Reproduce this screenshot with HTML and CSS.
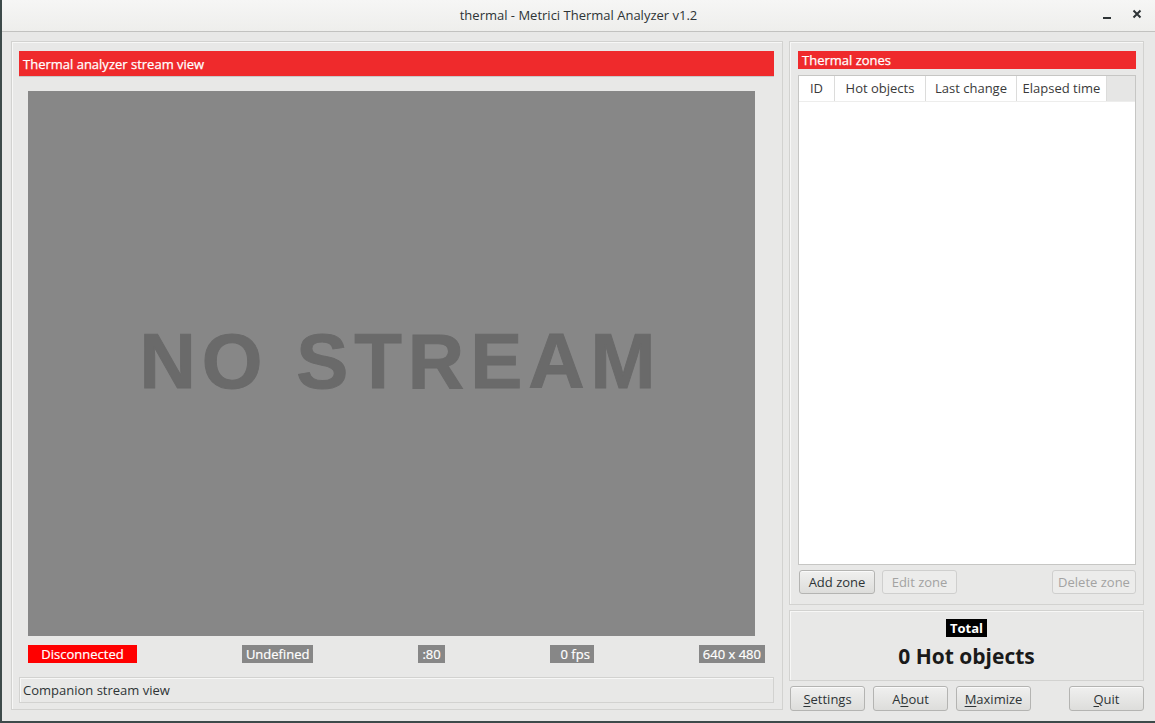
FILE: index.html
```html
<!DOCTYPE html>
<html>
<head>
<meta charset="utf-8">
<link rel="stylesheet" href="styles.css">
</head>
<body>
<div class="window">
  <div class="titlebar">
    <span class="title">thermal - Metrici Thermal Analyzer v1.2</span>
    <div class="wbtns">
      <svg width="12" height="12" viewBox="0 0 12 12"><rect x="2" y="9" width="8" height="2" fill="#2e3436"/></svg>
      <svg width="12" height="12" viewBox="0 0 12 12"><path d="M2.5 2.5 L9.5 9.5 M9.5 2.5 L2.5 9.5" stroke="#2e3436" stroke-width="2"/></svg>
    </div>
  </div>
  <div class="main">
    <div class="frame left">
      <div class="redhead big">Thermal analyzer stream view</div>
      <div class="stream"><span>NO STREAM</span></div>
      <div class="status">
        <span class="tag red">Disconnected</span>
        <span class="tag">Undefined</span>
        <span class="tag">:80</span>
        <span class="tag fps">0 fps</span>
        <span class="tag">640 x 480</span>
      </div>
      <div class="companion">Companion stream view</div>
    </div>
    <div class="right">
      <div class="frame zones">
        <div class="redhead small">Thermal zones</div>
        <div class="table">
          <div class="thead">
            <div class="th c1">ID</div>
            <div class="th c2">Hot objects</div>
            <div class="th c3">Last change</div>
            <div class="th c4">Elapsed time</div>
          </div>
          <div class="tbody"></div>
        </div>
        <div class="zbtns">
          <button class="btn small">Add zone</button>
          <button class="btn small dis">Edit zone</button>
          <span class="spacer"></span>
          <button class="btn small dis">Delete zone</button>
        </div>
      </div>
      <div class="frame total">
        <span class="totlabel">Total</span>
        <span class="totval">0 Hot objects</span>
      </div>
      <div class="mainbtns">
        <button class="btn"><u>S</u>ettings</button>
        <button class="btn">A<u>b</u>out</button>
        <button class="btn"><u>M</u>aximize</button>
        <span class="spacer"></span>
        <button class="btn"><u>Q</u>uit</button>
      </div>
    </div>
  </div>
</div>
</body>
</html>
```
FILE: styles.css
```css
html, body {
  margin: 0;
  padding: 0;
}
body {
  width: 1155px;
  height: 723px;
  background: #3d4a4a;
  font-family: "Open Sans", "Noto Sans", sans-serif;
  font-size: 13px;
  color: #2e3436;
  overflow: hidden;
}
.window {
  width: 1153px;
  height: 721px;
  margin-left: 2px;
  background: #e8e8e7;
  display: flex;
  flex-direction: column;
}
.titlebar {
  height: 31px;
  flex: none;
  background: linear-gradient(#f6f6f5, #eeeeec);
  border-bottom: 1px solid #c2c2c0;
  position: relative;
  display: flex;
  align-items: center;
  justify-content: center;
}
.title {
  font-size: 13px;
  color: #2e3436;
  margin-top: -1px;
}
.wbtns {
  position: absolute;
  right: 12px;
  top: 8px;
  display: flex;
  gap: 18px;
}
.main {
  flex: 1;
  display: flex;
  padding: 9px 9px 10px 9px;
  gap: 6px;
}
.frame {
  border: 1px solid #d2d2d0;
  box-shadow: inset 1px 1px 0 #f7f7f6;
  box-sizing: border-box;
}
.left {
  width: 772px;
  height: 669px;
  padding: 9px 8px 0 7px;
  display: flex;
  flex-direction: column;
}
.redhead {
  background: #ef2a2c;
  color: #fff;
  padding-left: 4px;
  display: flex;
  align-items: center;
  font-size: 13px;
  font-weight: 500;
  -webkit-text-stroke: 0.25px #fff;
}
.redhead.big {
  height: 25px;
  box-shadow: 0 1px 0 #c8c8c8;
}
.redhead.small {
  height: 18px;
}
.stream {
  margin: 15px 0 0 9px;
  width: 727px;
  height: 545px;
  background: #878787;
  display: flex;
  align-items: center;
  justify-content: center;
}
.stream span {
  font-family: "Liberation Sans", Arial, sans-serif;
  font-weight: bold;
  font-size: 78px;
  letter-spacing: 6px;
  color: #6a6a6a;
  margin-top: -4px;
  margin-left: 18px;
  -webkit-text-stroke: 1px #6a6a6a;
}
.status {
  margin: 9px 0 0 9px;
  width: 737px;
  height: 18px;
  display: flex;
  justify-content: space-between;
}
.tag {
  background: #878787;
  color: #fff;
  padding: 0 4px;
  height: 18px;
  line-height: 18px;
  font-size: 13px;
  -webkit-text-stroke: 0.2px #fff;
}
.tag.red {
  background: #ff0000;
  width: 101px;
  text-align: center;
}
.tag.fps {
  padding-left: 11px;
}
.companion {
  margin-top: 14px;
  height: 24px;
  border: 1px solid #d2d2d0;
  box-shadow: inset 1px 1px 0 #f7f7f6;
  padding-left: 3px;
  display: flex;
  align-items: center;
  color: #2e3436;
}
.right {
  width: 355px;
  display: flex;
  flex-direction: column;
}
.zones {
  height: 564px;
  padding: 9px 7px 0 8px;
  display: flex;
  flex-direction: column;
}
.table {
  margin-top: 6px;
  height: 490px;
  border: 1px solid #c6c6c4;
  box-sizing: border-box;
  background: #fff;
  display: flex;
  flex-direction: column;
}
.thead {
  height: 25px;
  display: flex;
  background: #e6e6e5;
  border-bottom: 1px solid #ededec;
}
.th {
  background: #fff;
  border-right: 1px solid #dcdcdb;
  display: flex;
  align-items: center;
  justify-content: center;
  color: #3a3a3a;
  padding-bottom: 1px;
}
.c1 { width: 35px; }
.c2 { width: 90px; }
.c3 { width: 90px; }
.c4 { width: 89px; }
.tbody {
  flex: 1;
  background: #fff;
}
.zbtns {
  margin-top: 5px;
  display: flex;
  gap: 7px;
  padding-left: 1px;
}
.spacer {
  flex: 1;
}
.btn {
  font-family: "Open Sans", "Noto Sans", sans-serif;
  font-size: 13px;
  color: #2e3436;
  height: 24px;
  width: 75px;
  padding: 0;
  border: 1px solid #b4b4b2;
  border-radius: 3px;
  background: linear-gradient(#f0f0ef, #dddddb);
  box-shadow: inset 0 1px 0 #fafafa;
}
.btn.small {
  height: 24px;
}
.btn.dis {
  color: #a3a3a2;
  border-color: #cfcfce;
  background: #ececeb;
  box-shadow: none;
}
.zbtns .btn:first-child { width: 76px; }
.zbtns .btn:last-child { width: 84px; }
.btn u {
  text-decoration: underline;
  text-underline-offset: 2px;
}
.total {
  margin-top: 5px;
  height: 71px;
  display: flex;
  flex-direction: column;
  align-items: center;
  padding-top: 8px;
}
.totlabel {
  background: #000;
  color: #fff;
  font-weight: bold;
  font-size: 13px;
  height: 18px;
  line-height: 18px;
  padding: 0 4px;
}
.totval {
  font-weight: bold;
  font-size: 21px;
  color: #1a1a1a;
  line-height: 26px;
  margin-top: 6px;
}
.mainbtns {
  margin-top: 5px;
  display: flex;
  gap: 8px;
  padding-left: 1px;
}
.mainbtns .btn {
  height: 25px;
}
```
